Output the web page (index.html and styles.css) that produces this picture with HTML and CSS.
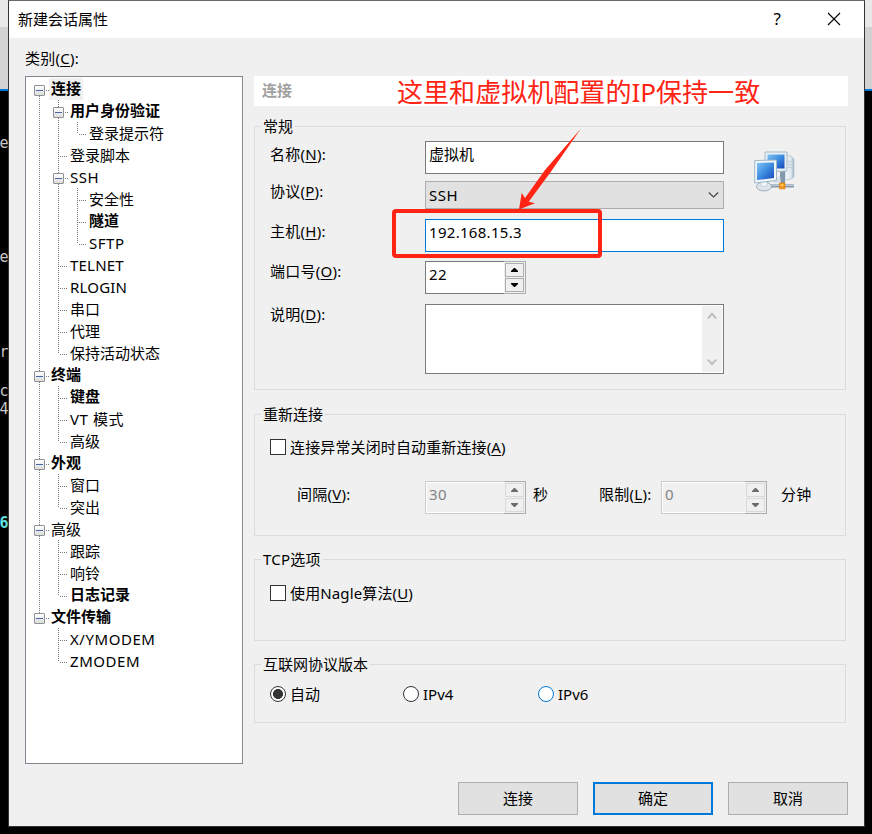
FILE: index.html
```html
<!DOCTYPE html>
<html lang="zh-CN">
<head>
<meta charset="utf-8">
<title>新建会话属性</title>
<link rel="stylesheet" href="styles.css">
</head>
<body>
<div class="desktop">
  <div class="strip strip-left">
    <span class="peek p1">e</span><span class="peek p2">e</span><span class="peek p3">r</span><span class="peek p4">c</span><span class="peek p5">4</span><span class="peek p6">6</span>
  </div>
  <main class="dialog">
    <header class="titlebar">
      <h1>新建会话属性</h1>
      <span class="help">?</span>
      <svg class="close" width="12" height="12" viewBox="0 0 12 12"><path d="M0 0L12 12M12 0L0 12"/></svg>
    </header>
    <div class="content">
      <section class="sidebar">
        <div class="caption">类别(<u>C</u>):</div>
        <div class="tree">
          <div class="row"><i class="c down box"></i><b class="sel">连接</b></div>
          <div class="row"><i class="c v"></i><i class="c v box"></i><b>用户身份验证</b></div>
          <div class="row"><i class="c v"></i><i class="c v"></i><i class="c end"></i><span>登录提示符</span></div>
          <div class="row"><i class="c v"></i><i class="c v tee"></i><span>登录脚本</span></div>
          <div class="row"><i class="c v"></i><i class="c v box"></i><span class="lat">SSH</span></div>
          <div class="row"><i class="c v"></i><i class="c v"></i><i class="c v tee"></i><span>安全性</span></div>
          <div class="row"><i class="c v"></i><i class="c v"></i><i class="c v tee"></i><b>隧道</b></div>
          <div class="row"><i class="c v"></i><i class="c v"></i><i class="c end"></i><span class="lat">SFTP</span></div>
          <div class="row"><i class="c v"></i><i class="c v tee"></i><span class="lat2">TELNET</span></div>
          <div class="row"><i class="c v"></i><i class="c v tee"></i><span class="lat2">RLOGIN</span></div>
          <div class="row"><i class="c v"></i><i class="c v tee"></i><span>串口</span></div>
          <div class="row"><i class="c v"></i><i class="c v tee"></i><span>代理</span></div>
          <div class="row"><i class="c v"></i><i class="c end"></i><span>保持活动状态</span></div>
          <div class="row"><i class="c v box"></i><b>终端</b></div>
          <div class="row"><i class="c v"></i><i class="c v tee"></i><b>键盘</b></div>
          <div class="row"><i class="c v"></i><i class="c v tee"></i><span class="lat">VT 模式</span></div>
          <div class="row"><i class="c v"></i><i class="c end"></i><span>高级</span></div>
          <div class="row"><i class="c v box"></i><b>外观</b></div>
          <div class="row"><i class="c v"></i><i class="c v tee"></i><span>窗口</span></div>
          <div class="row"><i class="c v"></i><i class="c end"></i><span>突出</span></div>
          <div class="row"><i class="c v box"></i><span>高级</span></div>
          <div class="row"><i class="c v"></i><i class="c v tee"></i><span>跟踪</span></div>
          <div class="row"><i class="c v"></i><i class="c v tee"></i><span>响铃</span></div>
          <div class="row"><i class="c v"></i><i class="c end"></i><b>日志记录</b></div>
          <div class="row"><i class="c up box"></i><b>文件传输</b></div>
          <div class="row"><i class="c"></i><i class="c v tee"></i><span class="lat">X/YMODEM</span></div>
          <div class="row"><i class="c"></i><i class="c end"></i><span class="lat">ZMODEM</span></div>
        </div>
      </section>
      <section class="panel">
        <div class="panel-head">连接</div>

        <fieldset class="general">
          <legend>常规</legend>
          <div class="form">
            <div class="field name"><label>名称(<u>N</u>):</label><div class="edit">虚拟机</div></div>
            <div class="field proto"><label>协议(<u>P</u>):</label><div class="combo"><span class="lat">SSH</span><svg width="11" height="6" viewBox="0 0 11 6"><path d="M.8.5L5.5 5L10.2.5"/></svg></div></div>
            <div class="field host"><label>主机(<u>H</u>):</label><div class="edit focus num">192.168.15.3</div></div>
            <div class="field port"><label>端口号(<u>O</u>):</label>
              <div class="spin"><div class="val">22</div><div class="arrows"><span><svg width="7" height="4" viewBox="0 0 7 4"><path d="M3 0h1l3 3v1H0V3z"/></svg></span><span><svg width="7" height="4" viewBox="0 0 7 4"><path d="M0 0h7v1L4 4H3L0 1z"/></svg></span></div></div>
            </div>
            <div class="field desc"><label>说明(<u>D</u>):</label>
              <div class="area"><div class="scroll"><svg width="10" height="8" viewBox="0 0 10 8"><path d="M.8 6.4L5 2L9.2 6.4"/></svg><svg width="10" height="8" viewBox="0 0 10 8"><path d="M.8 1.6L5 6L9.2 1.6"/></svg></div></div>
            </div>
          </div>
          <svg class="net" width="42" height="42" viewBox="0 0 42 42">
            <defs>
              <linearGradient id="scr" x1="0" y1="0" x2="1" y2="1"><stop offset="0" stop-color="#7fc4f4"/><stop offset=".5" stop-color="#3c8be0"/><stop offset="1" stop-color="#1747b8"/></linearGradient>
              <linearGradient id="case" x1="0" y1="0" x2="1" y2="0"><stop offset="0" stop-color="#f7fafc"/><stop offset=".7" stop-color="#dbe4eb"/><stop offset="1" stop-color="#9aafc0"/></linearGradient>
            </defs>
            <path d="M32 4l5 1 3 3v18l-3 2-6 1z" fill="url(#case)" stroke="#b2c1cd" stroke-width=".7"/>
            <path d="M34 10l4 1M34 13l4 1M34 16l4 1" stroke="#b0c2cf" stroke-width=".8"/>
            <path d="M26 20h5v14h-5z" fill="#8299ab"/>
            <path d="M11 1h22v19l-22 1z" fill="#e9f0f5" stroke="#a5b8c6" stroke-width="1"/>
            <path d="M13.500 3.500h17v14h-17z" fill="url(#scr)"/>
            <ellipse cx="10" cy="35.500" rx="7.500" ry="4.500" fill="#dce5ec" stroke="#9dafbd"/>
            <path d="M7 30h6v5H7z" fill="#f3f7fa" stroke="#b6c5d0" stroke-width=".6"/>
            <path d="M20 29l6-4 1 7h-7z" fill="#d5e0e8"/>
            <path d="M.700 9.500L22.500 9v20.500L.700 32z" fill="#eff5f8" stroke="#9fb5c5"/>
            <path d="M3 12l17-.5v15.500L3 29z" fill="url(#scr)"/>
            <path d="M17 33.300h23v3.200H17z" fill="#8a9cab"/><path d="M17 33.800h23v1H17z" fill="#c8d5de"/>
            <path d="M25.500 32h5.500v5.800h-5.500z" fill="#f7961d" stroke="#d77c0d" stroke-width=".7"/><path d="M26.500 33h3v2h-3z" fill="#ffc24d"/>
          </svg>
        </fieldset>

        <fieldset class="reconnect">
          <legend>重新连接</legend>
          <div class="check"><i></i><span>连接异常关闭时自动重新连接(<u>A</u>)</span></div>
          <div class="timing">
            <label class="t1">间隔(<u>V</u>):</label>
            <div class="spin off"><div class="val">30</div><div class="arrows"><span><svg width="7" height="4" viewBox="0 0 7 4"><path d="M3 0h1l3 3v1H0V3z"/></svg></span><span><svg width="7" height="4" viewBox="0 0 7 4"><path d="M0 0h7v1L4 4H3L0 1z"/></svg></span></div></div>
            <label class="t2">秒</label>
            <label class="t3">限制(<u>L</u>):</label>
            <div class="spin off wide"><div class="val">0</div><div class="arrows"><span><svg width="7" height="4" viewBox="0 0 7 4"><path d="M3 0h1l3 3v1H0V3z"/></svg></span><span><svg width="7" height="4" viewBox="0 0 7 4"><path d="M0 0h7v1L4 4H3L0 1z"/></svg></span></div></div>
            <label class="t4">分钟</label>
          </div>
        </fieldset>

        <fieldset class="tcp">
          <legend class="lat2">TCP选项</legend>
          <div class="check"><i></i><span>使用Nagle算法(<u>U</u>)</span></div>
        </fieldset>

        <fieldset class="ipver">
          <legend>互联网协议版本</legend>
          <div class="radios">
            <div class="radio on"><i></i>自动</div>
            <div class="radio"><i></i>IPv4</div>
            <div class="radio hot"><i></i>IPv6</div>
          </div>
        </fieldset>

        <div class="buttons"><div class="btn">连接</div><div class="btn primary">确定</div><div class="btn">取消</div></div>
      </section>
    </div>
  </main>
  <div class="strip strip-right"></div>

  <div class="note">这里和虚拟机配置的IP保持一致</div>
  <div class="note-frame"></div>
  <svg class="note-arrow" width="66" height="84" viewBox="0 0 66 84"><path d="M65 1.500L29 43L9 71L5.700 66L3 82.500L19 76.300L12.700 74.700L34 46Z"/></svg>
</div>
</body>
</html>
```
FILE: styles.css
```css
*, *::before, *::after { box-sizing: border-box; }
body {
  margin: 0;
  width: 872px;
  height: 834px;
  overflow: hidden;
  background: #000;
  color: #000;
  font: 15px/22px "Noto Sans", "Noto Sans CJK SC", sans-serif;
}
u { text-decoration: underline; text-decoration-thickness: 1px; text-underline-offset: 2px; }
svg { display: block; overflow: visible; }
.lat { letter-spacing: .55px; }
.lat2 { letter-spacing: .2px; }

.desktop { position: relative; display: flex; height: 834px; }
.strip {
  height: 834px;
  overflow: hidden;
  background: linear-gradient(#e8e8e8 0 27px, #d2d2d2 27px 89px, #0078d7 89px 91px, #000 91px);
}
.strip-left { width: 8px; display: flex; flex-direction: column; }
.strip-right { width: 7px; }
.peek { color: #c8c8c8; font: 15px/18px "DejaVu Sans Mono", monospace; margin-left: -.5px; }
.p1 { margin-top: 134px; }
.p2 { margin-top: 96px; }
.p3 { margin-top: 77px; }
.p4 { margin-top: 21px; }
.p6 { margin-top: 96px; color: #61e0e0; font-weight: bold; }

.dialog {
  width: 857px;
  height: 827px;
  background: #f0f0f0;
  border: 1px solid #343434;
  border-top-color: #696969;
}
.titlebar { height: 37px; background: #fff; display: flex; align-items: center; padding: 0 24px 0 9px; }
.titlebar h1 { margin: 0; padding-bottom: 2px; font-size: 15px; font-weight: 400; flex: 1; }
.help { font: 17px/22px "Noto Sans", sans-serif; margin-right: 47px; padding-bottom: 2px; }
.close { margin-bottom: 1px; }
.close path { stroke: #000; stroke-width: 1.1; fill: none; }
.content { display: flex; padding-left: 16px; }

.sidebar { width: 218px; padding-top: 9px; margin-right: 11px; }
.caption { height: 29px; letter-spacing: .25px; }
.tree { height: 688px; background: #fff; border: 1px solid #828790; padding: 1px 0 0 4px; }
.row { display: flex; height: 22px; white-space: pre; }
.row span, .row b { padding: 0 2px; line-height: 22px; }
.row b { line-height: 20px; }
.row .sel { background: #f0f0f0; }
.c { position: relative; flex: none; width: 19px; height: 22px; }
.v, .down, .up, .end {
  background: repeating-linear-gradient(#777 0 1px, transparent 1px 2px) 9px 0 / 1px 22px no-repeat;
}
.down { background-position: 9px 12px; }
.up, .end { background-size: 1px 12px; }
.tee::after, .end::after, .box::after {
  content: "";
  position: absolute;
  left: 11px;
  top: 12px;
  width: 7px;
  height: 1px;
  background: repeating-linear-gradient(90deg, #777 0 1px, transparent 1px 2px);
}
.box::after { left: 16px; width: 3px; }
.box::before {
  content: "";
  position: absolute;
  left: 4px;
  top: 7px;
  width: 11px;
  height: 11px;
  border: 1px solid #919191;
  border-radius: 1px;
  background: linear-gradient(#4b63a7, #4b63a7) 1px 4px / 7px 1px no-repeat, linear-gradient(#fff, #dcdcdc);
}

.panel { width: 594px; padding-top: 38px; }
.panel-head { height: 30px; padding-left: 8px; background: #fff; color: #a0a0a0; font-weight: bold; line-height: 28px; }
fieldset { width: 592px; margin: 0; padding: 0 0 0 15px; border: 1px solid #dcdcdc; min-width: 0; }
legend { margin-left: -9px; padding: 0 2px; height: 22px; line-height: 22px; }
.general { height: 275px; margin-top: 9px; }
.reconnect { height: 133px; margin-top: 13px; }
.tcp { height: 93px; margin-top: 12px; }
.ipver { height: 70px; margin-top: 12px; }

.general .form { float: left; width: 454px; padding-top: 4px; }
.net { float: left; margin: 14px 0 0 30px; }
.field { display: flex; }
.field label { width: 155px; margin-top: -1px; letter-spacing: .25px; }
.name label { padding-top: 3px; }
.proto { margin-top: 7px; }
.host { margin-top: 10px; }
.host label { padding-top: 2px; }
.port { margin-top: 9px; }
.desc { margin-top: 10px; }
.edit { width: 299px; height: 33px; border: 1px solid #7a7a7a; background: #fff; padding: 1px 3px; }
.focus { border-color: #0078d7; }
.num { letter-spacing: .3px; }
.combo {
  display: flex;
  align-items: center;
  justify-content: space-between;
  width: 299px;
  height: 28px;
  padding: 0 4px 0 3px;
  border: 1px solid #adadad;
  background: #e1e1e1;
}
.combo path { fill: none; stroke: #444; stroke-width: 1.1; }
.area { display: flex; justify-content: flex-end; width: 299px; height: 70px; padding: 1px; border: 1px solid #7a7a7a; background: #fff; }
.scroll { width: 20px; background: #f0f0f0; display: flex; flex-direction: column; justify-content: space-between; align-items: center; padding: 6px 1px 6px 0; }
.scroll path { fill: none; stroke: #bcbcbc; stroke-width: 2; }

.spin { display: flex; width: 101px; height: 33px; }
.val { flex: 1; border: 1px solid #7a7a7a; border-right: 0; background: #fff; padding: 1px 3px; letter-spacing: .3px; }
.arrows { width: 22px; border: 1px solid #adadad; border-left: 0; background: #f0f0f0; padding: 1px; display: flex; flex-direction: column; gap: 1px; }
.arrows span { width: 19px; height: 14px; border: 1px solid #adadad; display: flex; align-items: center; justify-content: center; }
.off .val { border-color: #ccc; background: #f0f0f0; color: #838383; box-shadow: inset 0 1px #fff, inset 1px -1px #fff; }
.off .arrows span { border-color: #d9d9d9; }
.off .arrows path { fill: #6d6d6d; }
.wide { width: 106px; }

.check { display: flex; padding-top: 12px; letter-spacing: .13px; }
.check span { margin-top: -1px; margin-bottom: 1px; }
.tcp .check { padding-top: 13px; }
.check i { width: 16px; height: 16px; margin: 2px 4px 0 0; border: 1px solid #333; background: #fff; }
.timing { display: flex; padding-left: 27px; margin-top: 22px; height: 33px; }
.timing label { padding-top: 2px; white-space: nowrap; letter-spacing: .25px; }
.timing .t1 { width: 128px; }
.timing .t2 { width: 73px; padding-left: 7px; }
.timing .t3 { width: 62px; }
.timing .t4 { padding-left: 14px; }

.radios { display: flex; padding-top: 8px; }
.radio { display: flex; width: 133px; }
.radio + .radio { width: 135px; }
.radio i { width: 16px; height: 16px; margin: 3px 4px 0 0; border: 1px solid #333; border-radius: 50%; background: #fff; }
.on i { background: radial-gradient(circle, #333 0 4.700px, #fff 5.300px); }
.hot i { border-color: #0078d7; }

.buttons { display: flex; justify-content: flex-end; gap: 15px; margin-top: 59px; }
.btn { width: 120px; height: 33px; border: 1px solid #adadad; background: #e1e1e1; text-align: center; line-height: 31px; }
.primary { border: 2px solid #0078d7; line-height: 29px; }

.note { position: absolute; left: 397px; top: 74px; color: #ff2414; font-size: 26.050px; line-height: 36px; white-space: nowrap; }
.note-frame { position: absolute; left: 392px; top: 209px; width: 210px; height: 49px; border: 4px solid #ff2414; border-radius: 4px; }
.note-arrow { position: absolute; left: 516px; top: 127px; }
.note-arrow path { fill: #ff2414; }
```
